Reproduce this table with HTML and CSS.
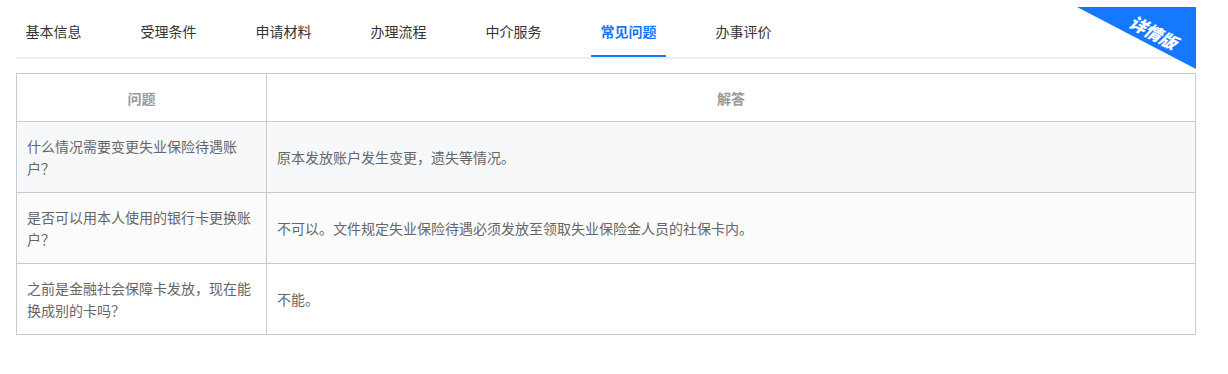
FILE: index.html
```html
<!DOCTYPE html>
<html lang="zh-CN">
<head>
<meta charset="utf-8">
<title>常见问题</title>
<link rel="stylesheet" href="styles.css">
</head>
<body>
<div class="wrap">
  <nav class="tabs">
    <a class="tab">基本信息</a>
    <a class="tab">受理条件</a>
    <a class="tab">申请材料</a>
    <a class="tab">办理流程</a>
    <a class="tab">中介服务</a>
    <a class="tab active">常见问题</a>
    <a class="tab">办事评价</a>
  </nav>
  <svg class="ribbon" width="119" height="62" viewBox="0 0 119 62">
    <polygon points="0,0 119,0 119,62" fill="#1677ff"/>
    <text x="76" y="32" transform="rotate(28 76 26)" text-anchor="middle" class="ribbon-text">详情版</text>
  </svg>
  <table class="faq">
    <thead>
      <tr><th class="q-col">问题</th><th>解答</th></tr>
    </thead>
    <tbody>
      <tr class="r1"><td class="q">什么情况需要变更失业保险待遇账户？</td><td class="a">原本发放账户发生变更，遗失等情况。</td></tr>
      <tr class="r2"><td class="q">是否可以用本人使用的银行卡更换账户？</td><td class="a">不可以。文件规定失业保险待遇必须发放至领取失业保险金人员的社保卡内。</td></tr>
      <tr class="r3"><td class="q">之前是金融社会保障卡发放，现在能换成别的卡吗？</td><td class="a">不能。</td></tr>
    </tbody>
  </table>
</div>
</body>
</html>
```

FILE: styles.css
```css
html, body {
  margin: 0;
  padding: 0;
  background: #ffffff;
}
body {
  font-family: "Noto Sans CJK SC", "Noto Sans", sans-serif;
  font-size: 14px;
  color: #333333;
}
.wrap {
  position: relative;
  width: 1180px;
  margin-left: 16px;
  padding-top: 7px;
}
.tabs {
  display: flex;
  gap: 40px;
  border-bottom: 2px solid #eeeeee;
}
.tab {
  box-sizing: border-box;
  height: 50px;
  line-height: 48px;
  padding: 0 9.5px;
  border-bottom: 2px solid transparent;
  color: #333333;
  font-size: 14px;
  white-space: nowrap;
}
.tab.active {
  color: #1677ff;
  font-weight: 700;
  border-bottom-color: #1677ff;
}
.ribbon {
  position: absolute;
  top: 7px;
  right: 0;
  display: block;
}
.ribbon-text {
  fill: #ffffff;
  font-family: "Noto Sans CJK SC", sans-serif;
  font-size: 17px;
  font-weight: 900;
  font-style: italic;
}
.faq {
  width: 1180px;
  margin-top: 14px;
  border-collapse: collapse;
  table-layout: fixed;
}
.faq th, .faq td {
  border: 1px solid #c8cad1;
}
.faq th {
  height: 47px;
  padding: 0;
  font-size: 14px;
  font-weight: 700;
  color: #999999;
  text-align: center;
}
.q-col {
  width: 249px;
}
.faq td {
  box-sizing: border-box;
  height: 71px;
  padding: 13px 10px;
  line-height: 22px;
  color: #666666;
  font-size: 14px;
  vertical-align: middle;
}
.r1 td { background: #f7f8fa; }
.r2 td { background: #fbfbfc; }
.r3 td { background: #ffffff; }
```
